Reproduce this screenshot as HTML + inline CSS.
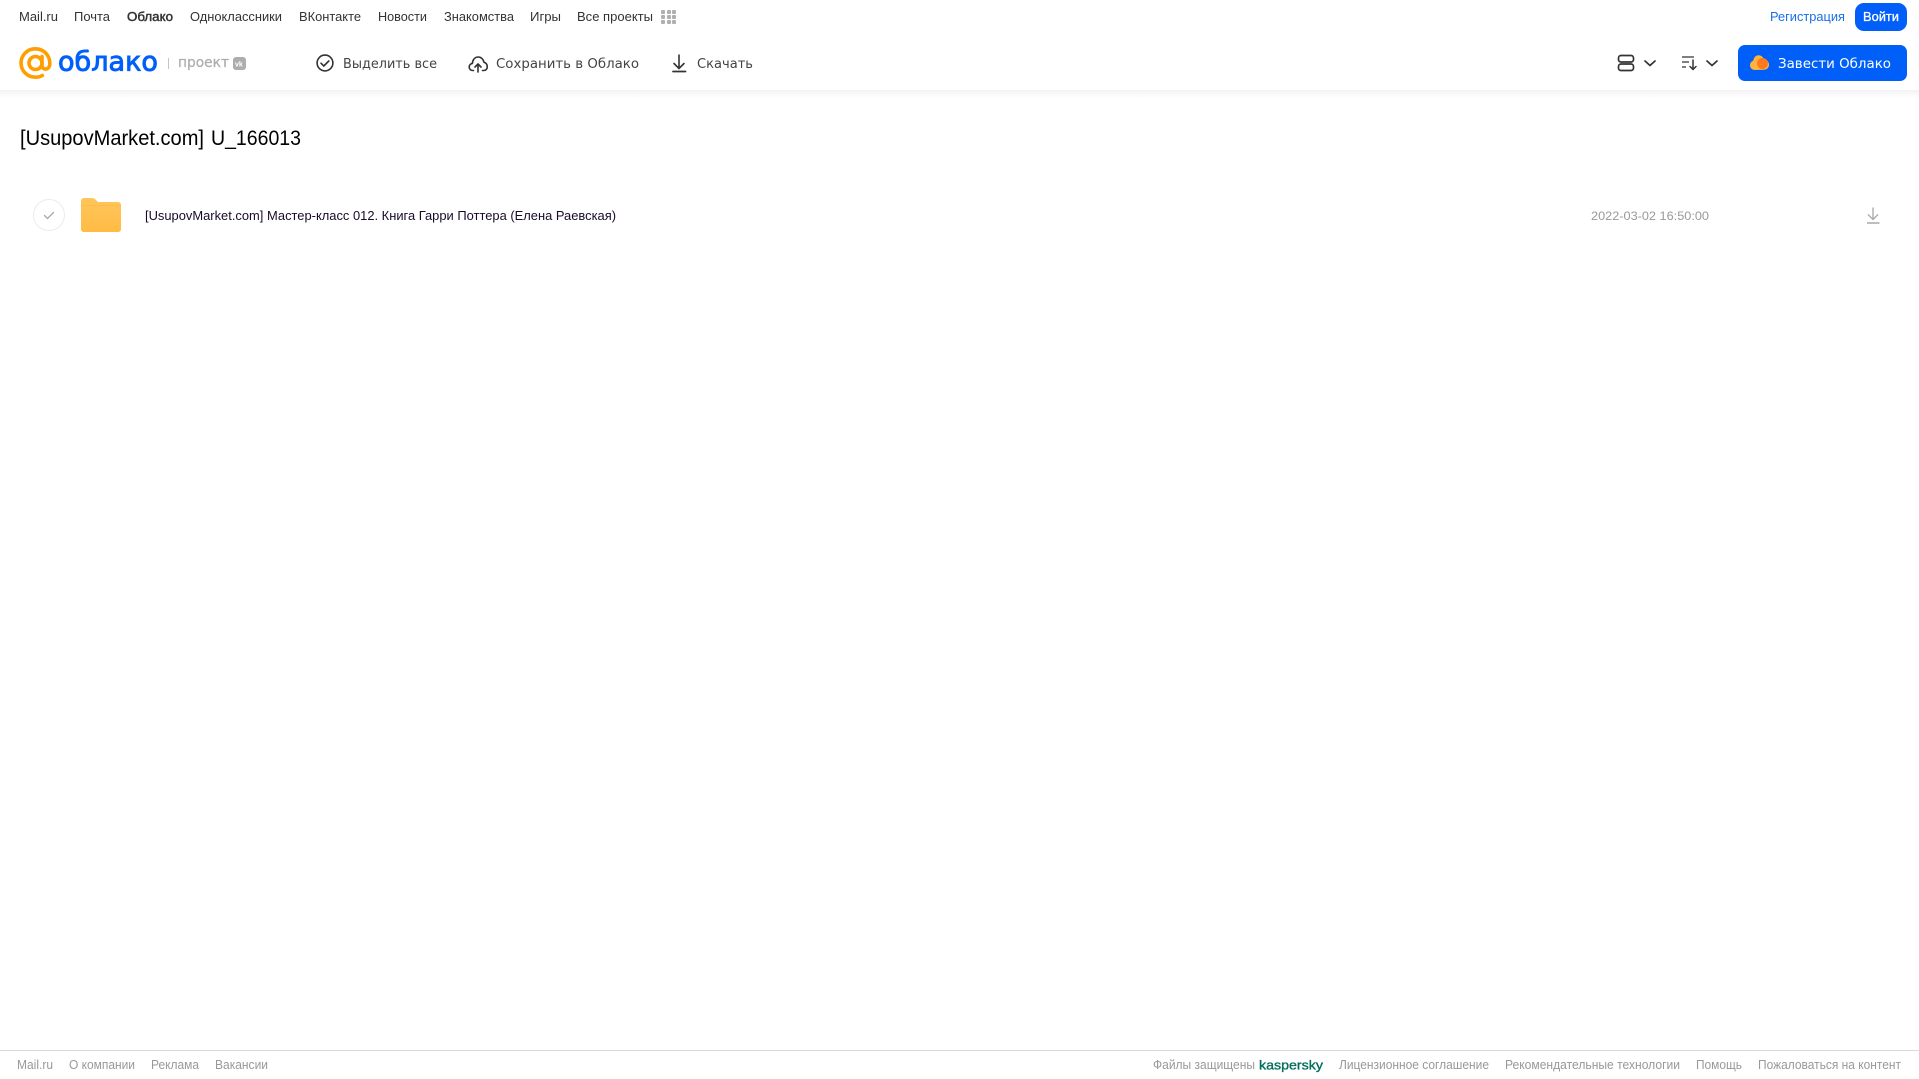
<!DOCTYPE html>
<html lang="ru">
<head>
<meta charset="utf-8">
<title>Облако</title>
<style>
html,body{margin:0;padding:0;background:#fff;width:1919px;height:1079px;overflow:hidden}
svg{display:block;position:absolute;left:0;top:0}
text{font-family:"Liberation Sans",Arial,sans-serif;white-space:pre}
.n{font-size:12.5px;fill:#333}
.t{font-size:13px;fill:#444;font-family:"DejaVu Sans",sans-serif}
.f{font-size:12.5px;fill:#999}
</style>
</head>
<body>
<svg width="1919" height="1079" viewBox="0 0 1919 1079" xmlns="http://www.w3.org/2000/svg">
<defs>
<linearGradient id="sh" x1="0" y1="0" x2="0" y2="1"><stop offset="0" stop-color="#000" stop-opacity=".05"/><stop offset="1" stop-color="#000" stop-opacity="0"/></linearGradient>
<linearGradient id="fo" x1="0" y1="0" x2="0" y2="1"><stop offset="0" stop-color="#ffc65c"/><stop offset="1" stop-color="#ffbb44"/></linearGradient>
</defs>
<rect width="1919" height="1079" fill="#fff"/>
<rect x="0" y="90" width="1919" height="8" fill="url(#sh)"/>

<!-- top nav -->
<text class="n" x="19" y="21" textLength="39" lengthAdjust="spacingAndGlyphs">Mail.ru</text>
<text class="n" x="74" y="21" textLength="36" lengthAdjust="spacingAndGlyphs">Почта</text>
<text class="n" x="127" y="21" textLength="46" lengthAdjust="spacingAndGlyphs" stroke="#333" stroke-width=".45">Облако</text>
<text class="n" x="190" y="21" textLength="92" lengthAdjust="spacingAndGlyphs">Одноклассники</text>
<text class="n" x="299" y="21" textLength="62" lengthAdjust="spacingAndGlyphs">ВКонтакте</text>
<text class="n" x="378" y="21" textLength="49" lengthAdjust="spacingAndGlyphs">Новости</text>
<text class="n" x="444" y="21" textLength="70" lengthAdjust="spacingAndGlyphs">Знакомства</text>
<text class="n" x="530" y="21" textLength="31" lengthAdjust="spacingAndGlyphs">Игры</text>
<text class="n" x="577" y="21" textLength="76" lengthAdjust="spacingAndGlyphs">Все проекты</text>
<g fill="#b0b0b0">
<rect x="661" y="10" width="4" height="4" rx="1"/><rect x="667" y="10" width="4" height="4" rx="1"/><rect x="672" y="10" width="4" height="4" rx="1"/>
<rect x="661" y="15" width="4" height="4" rx="1"/><rect x="667" y="15" width="4" height="4" rx="1"/><rect x="672" y="15" width="4" height="4" rx="1"/>
<rect x="661" y="20" width="4" height="4" rx="1"/><rect x="667" y="20" width="4" height="4" rx="1"/><rect x="672" y="20" width="4" height="4" rx="1"/>
</g>
<text x="1770" y="21" font-size="12.5" fill="#1a6fe8" textLength="75" lengthAdjust="spacingAndGlyphs">Регистрация</text>
<rect x="1855" y="3" width="52" height="28" rx="9" fill="#005ff9"/>
<text x="1863" y="21" font-size="12.5" fill="#fff" stroke="#fff" stroke-width=".3" textLength="36" lengthAdjust="spacingAndGlyphs">Войти</text>

<!-- logo -->
<g fill="none" stroke="#ff9e00" stroke-width="3.600">
<circle cx="35.500" cy="63" r="6.500"/>
<path d="M42 56.500v9c0 5 7.500 5 7.800-1.500.4-8.500-6-15.200-14.500-15.200-8 0-14.300 6.400-14.300 14.200s6.300 14.200 14.300 14.200c2.800 0 5-.5 7-1.700" stroke-linecap="round"/>
</g>
<text x="58" y="70.500" font-size="27" fill="#005ff9" stroke="#005ff9" stroke-width=".9" style="font-family:'DejaVu Sans',sans-serif" textLength="100" lengthAdjust="spacingAndGlyphs">облако</text>
<rect x="168" y="58" width="1" height="11" fill="#c4c4c4"/>
<text x="178" y="67" font-size="14" fill="#adadad" stroke="#adadad" stroke-width=".25" style="font-family:'DejaVu Sans',sans-serif" textLength="51" lengthAdjust="spacingAndGlyphs">проект</text>
<rect x="233" y="57" width="13" height="13" rx="3" fill="#adadad"/>
<text x="235" y="66.500" font-size="7" font-weight="700" fill="#fff">vk</text>

<!-- toolbar -->
<g fill="none" stroke="#333" stroke-width="1.600" stroke-linecap="round" stroke-linejoin="round">
<circle cx="325" cy="63" r="7.900"/>
<path d="M321 63.200l2.800 2.800 5-5"/>
<path d="M473.500 70.500h-.8c-2.200 0-3.500-1.600-3.500-3.500 0-1.900 1.300-3.300 3.100-3.600.3-3.600 2.600-6.400 5.900-6.400 3 0 5.300 2.300 5.800 5.300 2 .3 3.300 2.400 3.300 4.500 0 2.100-1.500 3.700-3.500 3.700h-1.300"/>
<path d="M478 72v-8M475 67l3-3 3 3"/>
<path d="M679 55v13M674 63.500l5 5 5-5" stroke-linejoin="miter"/>
<path d="M673 71.500h12.500" stroke-width="1.800"/>
</g>
<text class="t" x="343" y="68" textLength="94" lengthAdjust="spacingAndGlyphs">Выделить все</text>
<text class="t" x="496" y="68" textLength="143" lengthAdjust="spacingAndGlyphs">Сохранить в Облако</text>
<text class="t" x="697" y="68" textLength="56" lengthAdjust="spacingAndGlyphs">Скачать</text>

<!-- right controls -->
<g fill="none" stroke="#333" stroke-width="1.700" stroke-linecap="round" stroke-linejoin="round">
<rect x="1618.500" y="55.500" width="15" height="6.500" rx="2.500"/>
<rect x="1618.500" y="64" width="15" height="6.500" rx="2.500"/>
<path d="M1645 61l5 4.500 5-4.500"/>
<path d="M1707 61l5 4.500 5-4.500"/>
<path d="M1682 57h12M1682 62h7M1682 67h4" stroke-width="1.300" stroke-linecap="butt"/>
<path d="M1693 60v9M1690 66.500l3 3 3-3" stroke-width="1.500"/>
</g>
<rect x="1738" y="45" width="169" height="36" rx="7" fill="#005ff9"/>
<path d="M1755 70c-3 0-5-2-5-4.700 0-2.300 1.500-4 3.200-4.500.6-3.200 2.600-5.500 5.300-5.500 2.400 0 4.400 1.500 5.300 3.800 3 .2 5.200 2.700 5.200 5.700 0 2.900-2.200 5-5 5z" fill="#ffb23e"/>
<path d="M1757 63.500a5.500 5.500 0 1 1 5.500 5.500 5.500 5.500 0 0 1-5.500-5.500z" fill="#ff7a1f"/>
<text class="t" x="1778" y="68" style="fill:#fff" textLength="113" lengthAdjust="spacingAndGlyphs">Завести Облако</text>

<!-- title -->
<text x="20" y="145" font-size="21" fill="#000" textLength="184" lengthAdjust="spacingAndGlyphs">[UsupovMarket.com]</text>
<text x="211" y="145" font-size="21" fill="#000" textLength="90" lengthAdjust="spacingAndGlyphs">U_166013</text>

<!-- row -->
<circle cx="49" cy="215" r="15.500" fill="#fff" stroke="#ececec" stroke-width="1"/>
<path d="M44.500 215.500l3 3 6-6" fill="none" stroke="#a8a8a8" stroke-width="1.300" stroke-linecap="round" stroke-linejoin="round"/>
<path d="M81 201c0-1.700 1.300-3 3-3h8c1.500 0 2.500.5 3.500 1.500l2.500 2.500h20c1.700 0 3 1.300 3 3v24c0 1.700-1.300 3-3 3H84c-1.700 0-3-1.300-3-3z" fill="url(#fo)"/>
<rect x="81" y="205" width="40" height="1" fill="#ffb740" opacity=".7"/>
<text x="145" y="220" font-size="12.5" fill="#1a0a2a" textLength="471" lengthAdjust="spacingAndGlyphs">[UsupovMarket.com] Мастер-класс 012. Книга Гарри Поттера (Елена Раевская)</text>
<text x="1591" y="220" font-size="12" fill="#999" textLength="118" lengthAdjust="spacingAndGlyphs">2022-03-02 16:50:00</text>
<g fill="none" stroke="#a8a8a8" stroke-width="1.300">
<path d="M1873 207.500v12M1868 214.500l5 5 5-5"/>
<path d="M1867 223h12.500" stroke-width="1.500"/>
</g>

<!-- footer -->
<rect x="0" y="1050" width="1919" height="1" fill="#d9d9d9"/>
<text class="f" x="17" y="1069" textLength="36" lengthAdjust="spacingAndGlyphs">Mail.ru</text>
<text class="f" x="69" y="1069" textLength="66" lengthAdjust="spacingAndGlyphs">О компании</text>
<text class="f" x="151" y="1069" textLength="48" lengthAdjust="spacingAndGlyphs">Реклама</text>
<text class="f" x="215" y="1069" textLength="53" lengthAdjust="spacingAndGlyphs">Вакансии</text>
<text class="f" x="1153" y="1069" textLength="102" lengthAdjust="spacingAndGlyphs">Файлы защищены</text>
<text x="1259" y="1069.500" font-size="13" fill="#006d5c" stroke="#006d5c" stroke-width=".35" textLength="64" lengthAdjust="spacingAndGlyphs">kaspersky</text>
<text class="f" x="1339" y="1069" textLength="150" lengthAdjust="spacingAndGlyphs">Лицензионное соглашение</text>
<text class="f" x="1505" y="1069" textLength="175" lengthAdjust="spacingAndGlyphs">Рекомендательные технологии</text>
<text class="f" x="1696" y="1069" textLength="46" lengthAdjust="spacingAndGlyphs">Помощь</text>
<text class="f" x="1758" y="1069" textLength="143" lengthAdjust="spacingAndGlyphs">Пожаловаться на контент</text>
</svg>
</body>
</html>
